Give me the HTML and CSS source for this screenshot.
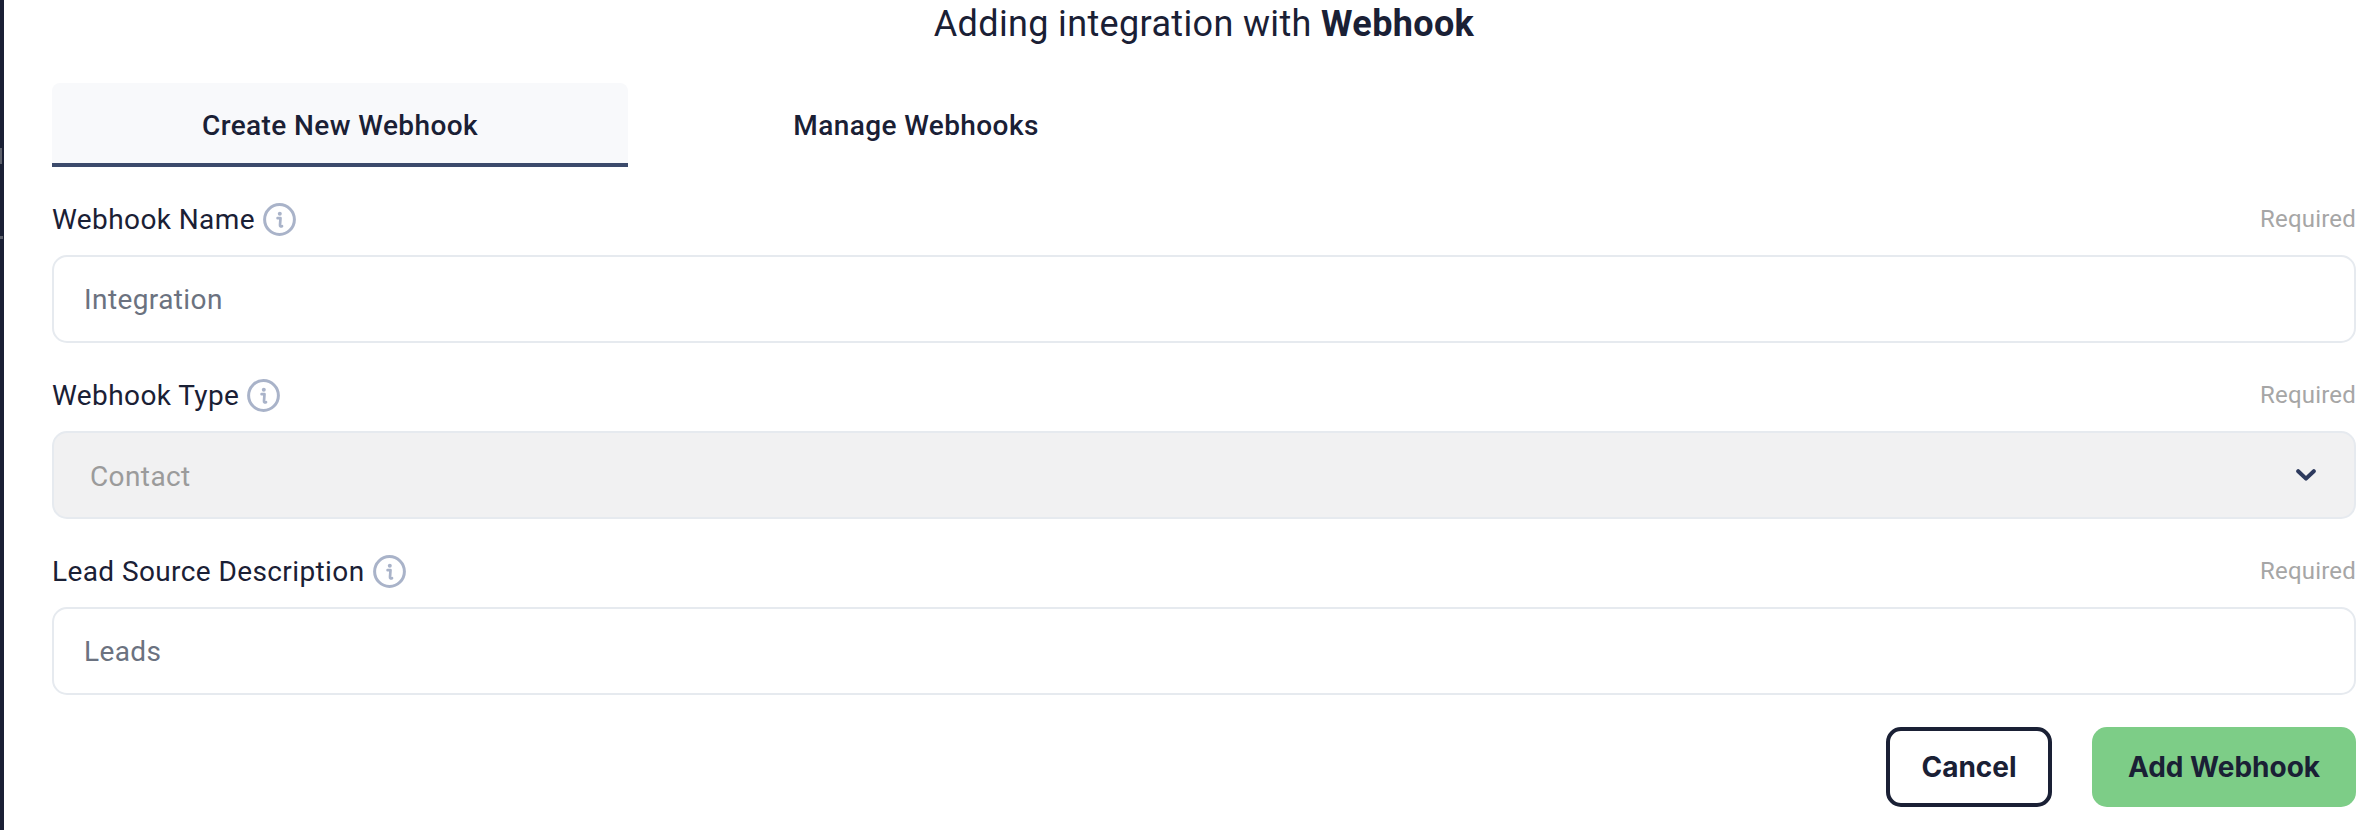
FILE: index.html
```html
<!DOCTYPE html>
<html lang="en">
<head>
<meta charset="utf-8">
<title>Adding integration with Webhook</title>
<link rel="stylesheet" href="styles.css">
</head>
<body>
<main class="panel">
  <span class="edge-mark edge-mark-a"></span>
  <span class="edge-mark edge-mark-b"></span>
  <h1 class="title">Adding integration with <strong>Webhook</strong></h1>
  <div class="tabs">
    <div class="tab tab-active">Create New Webhook</div>
    <div class="tab">Manage Webhooks</div>
  </div>
  <form class="form">
    <div class="field">
      <div class="label-row">
        <span class="label">Webhook Name</span>
        <svg class="info" viewBox="0 0 33 33"><circle cx="16.5" cy="16.5" r="14.9" fill="none" stroke="#a9b3c9" stroke-width="3"/><circle cx="16.8" cy="10.8" r="2" fill="#a9b3c9"/><path d="M14.6 15.2h2.9l-.5 6.8c-.1 1.4.8 1.8 2 1.2" fill="none" stroke="#a9b3c9" stroke-width="2.7" stroke-linecap="round" stroke-linejoin="round"/></svg>
        <span class="required">Required</span>
      </div>
      <div class="input">Integration</div>
    </div>
    <div class="field">
      <div class="label-row">
        <span class="label">Webhook Type</span>
        <svg class="info" viewBox="0 0 33 33"><circle cx="16.5" cy="16.5" r="14.9" fill="none" stroke="#a9b3c9" stroke-width="3"/><circle cx="16.8" cy="10.8" r="2" fill="#a9b3c9"/><path d="M14.6 15.2h2.9l-.5 6.8c-.1 1.4.8 1.8 2 1.2" fill="none" stroke="#a9b3c9" stroke-width="2.7" stroke-linecap="round" stroke-linejoin="round"/></svg>
        <span class="required">Required</span>
      </div>
      <div class="input select">
        <span class="select-value">Contact</span>
        <svg class="chevron" viewBox="0 0 20 12"><path d="M2.2 2.2 10 9.6l7.8-7.4" fill="none" stroke="#2d3a5e" stroke-width="4" stroke-linecap="round" stroke-linejoin="round"/></svg>
      </div>
    </div>
    <div class="field">
      <div class="label-row">
        <span class="label">Lead Source Description</span>
        <svg class="info" viewBox="0 0 33 33"><circle cx="16.5" cy="16.5" r="14.9" fill="none" stroke="#a9b3c9" stroke-width="3"/><circle cx="16.8" cy="10.8" r="2" fill="#a9b3c9"/><path d="M14.6 15.2h2.9l-.5 6.8c-.1 1.4.8 1.8 2 1.2" fill="none" stroke="#a9b3c9" stroke-width="2.7" stroke-linecap="round" stroke-linejoin="round"/></svg>
        <span class="required">Required</span>
      </div>
      <div class="input">Leads</div>
    </div>
    <div class="actions">
      <button type="button" class="btn btn-cancel">Cancel</button>
      <button type="button" class="btn btn-add">Add Webhook</button>
    </div>
  </form>
</main>
</body>
</html>
```
FILE: styles.css
```css
* { box-sizing: border-box; }
html, body { margin: 0; height: 100%; background: #fff; }
body { overflow: hidden; font-family: Roboto, "Liberation Sans", sans-serif; color: #1a2035; }
.panel { position: relative; height: 830px; border-left: 4px solid #1a2035; padding: 0 24px 0 48px; }
.edge-mark { position: absolute; left: -4px; width: 3px; background: #5c606b; }
.edge-mark-a { top: 148px; height: 16px; width: 2px; }
.edge-mark-b { top: 236px; height: 3px; }
.title { margin: 0; height: 83px; padding-top: 3px; font-size: 36px; line-height: 42px; font-weight: 400; letter-spacing: 0.35px; text-align: center; color: #1a2035; }
.title strong { font-weight: 700; }
.tabs { display: grid; grid-template-columns: 576px 576px; height: 84px; }
.tab { display: flex; align-items: center; justify-content: center; font-size: 28px; font-weight: 500; letter-spacing: 0.4px; }
.tab-active { background: #f8f9fb; border-bottom: 4px solid #3b4a6b; border-radius: 8px 8px 0 0; padding-top: 4px; }
.form { display: flex; flex-direction: column; }
.label-row { display: flex; align-items: center; gap: 8px; height: 32px; margin: 36px 0 20px; }
.label { font-size: 28px; letter-spacing: 0.4px; color: #1a2035; }
.info { width: 33px; height: 33px; flex: none; }
.required { margin-left: auto; font-size: 24px; letter-spacing: 0.2px; color: #a6a6a6; }
.input { display: flex; align-items: center; height: 88px; padding: 0 30px; border: 2px solid #e6eaef; border-radius: 15px; font-size: 28px; letter-spacing: 0.4px; color: #6b7280; background: #fff; }
.select { justify-content: space-between; padding: 0 38px 0 36px; background: #f1f1f2; color: #9b9b9b; }
.select-value { padding-top: 2px; }
.chevron { width: 20px; height: 12px; }
.actions { display: flex; justify-content: flex-end; gap: 40px; margin-top: 32px; }
.btn { height: 80px; border-radius: 15px; font-family: Inter, sans-serif; font-size: 28px; font-weight: 700; color: #1a2035; letter-spacing: 0; cursor: pointer; }
.btn-cancel { width: 166px; background: #fff; border: 4px solid #1a2035; }
.btn-add { width: 264px; background: #7dcd87; border: 0; }
```
